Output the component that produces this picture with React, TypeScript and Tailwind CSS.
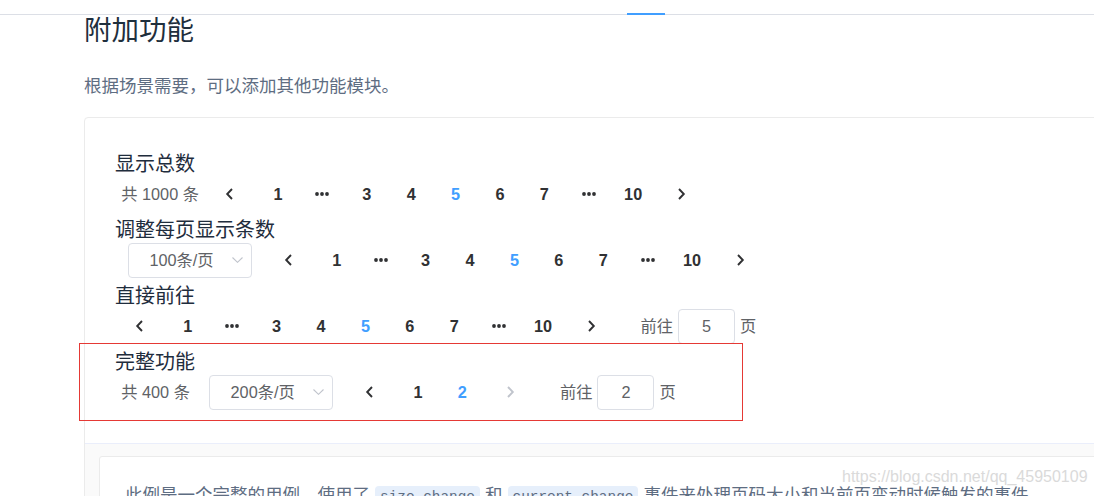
import React from "react";

const FONT = "font-['Liberation_Sans','Noto_Sans_CJK_SC',sans-serif]";

function ArrowLeft({ color = "#303133" }: { color?: string }) {
  return (
    <svg width="9" height="12" viewBox="0 0 9 12" fill="none">
      <path d="M7 1 L2.2 6 L7 11" stroke={color} strokeWidth="1.9" strokeLinejoin="miter" />
    </svg>
  );
}

function ArrowRight({ color = "#303133" }: { color?: string }) {
  return (
    <svg width="9" height="12" viewBox="0 0 9 12" fill="none">
      <path d="M2 1 L6.8 6 L2 11" stroke={color} strokeWidth="1.9" strokeLinejoin="miter" />
    </svg>
  );
}

function More() {
  return (
    <svg width="14" height="4" viewBox="0 0 14 4">
      <circle cx="2" cy="2" r="1.9" fill="#303133" />
      <circle cx="7" cy="2" r="1.9" fill="#303133" />
      <circle cx="12" cy="2" r="1.9" fill="#303133" />
    </svg>
  );
}

function Prev({ disabled }: { disabled?: boolean }) {
  return (
    <div className="flex h-[35px] w-[44.4px] items-center justify-center pl-[7.5px] pr-[15px]">
      <ArrowLeft color={disabled ? "#c0c4cc" : "#303133"} />
    </div>
  );
}

function Next({ disabled }: { disabled?: boolean }) {
  return (
    <div className="flex h-[35px] w-[44.4px] items-center justify-center pl-[15px] pr-[7.5px]">
      <ArrowRight color={disabled ? "#c0c4cc" : "#303133"} />
    </div>
  );
}

function Pager({ items, active }: { items: (number | "more")[]; active: number }) {
  return (
    <div className="flex">
      {items.map((it, i) => (
        <div
          key={i}
          className={`flex h-[35px] w-[44.4px] items-center justify-center text-[16.25px] font-bold ${
            it === active ? "text-[#409eff]" : "text-[#303133]"
          }`}
        >
          {it === "more" ? <More /> : it}
        </div>
      ))}
    </div>
  );
}

function Total({ n }: { n: number }) {
  return <span className="mr-[12.5px] text-[16.25px] text-[#606266]">共 {n} 条</span>;
}

function Sizes({ value }: { value: string }) {
  return (
    <div className="mr-[12.5px] px-[6.25px]">
      <div className="flex h-[35px] w-[124px] items-center rounded-[4px] border border-[#dcdfe6] pl-[12px] pr-[8px]">
        <span className="flex-1 text-center text-[16.25px] text-[#606266]">{value}</span>
        <svg className="ml-[9px]" width="11" height="6" viewBox="0 0 11 6" fill="none">
          <path d="M0.5 0.5 L5.5 5.3 L10.5 0.5" stroke="#c0c4cc" strokeWidth="1.1" />
        </svg>
      </div>
    </div>
  );
}

function Jumper({ value }: { value: number }) {
  return (
    <div className="ml-[31px] flex items-center text-[16.25px] text-[#606266]">
      <span>前往</span>
      <div className="mx-[5px] flex h-[35px] w-[57px] items-center justify-center rounded-[4px] border border-[#dcdfe6] text-[#606266]">
        {value}
      </div>
      <span>页</span>
    </div>
  );
}

function Block({ label, children }: { label: string; children: React.ReactNode }) {
  return (
    <div className="mb-[2px]">
      <div className="relative top-[2px] text-[20px] leading-[24px] text-[#1f2d3d]">{label}</div>
      <div className="flex h-[40px] items-center px-[6.25px]">{children}</div>
    </div>
  );
}

const TEN: (number | "more")[] = [1, "more", 3, 4, 5, 6, 7, "more", 10];

export default function App() {
  return (
    <div className={`relative h-[496px] w-[1094px] overflow-hidden bg-white ${FONT}`}>
      {/* top tab bar */}
      <div className="relative h-[15px] border-b border-[#dcdfe6]">
        <div className="absolute left-[627px] top-[13px] h-[2px] w-[38px] bg-[#409eff]" />
      </div>

      <div className="pl-[84px]">
        <h3 className="relative top-[1px] text-[27.5px] leading-[30px] text-[#1f2f3d]">附加功能</h3>
        <p className="mt-[28.5px] text-[17.5px] leading-[24px] text-[#5e6d82]">
          根据场景需要，可以添加其他功能模块。
        </p>

        <div className="mt-[19.5px] w-[1200px] rounded-[4px] border border-[#ebebeb]">
          <div className="px-[30px] pb-[29px] pt-[32px]">
            <Block label="显示总数">
              <Total n={1000} />
              <Prev />
              <Pager items={TEN} active={5} />
              <Next />
            </Block>
            <Block label="调整每页显示条数">
              <Sizes value="100条/页" />
              <Prev />
              <Pager items={TEN} active={5} />
              <Next />
            </Block>
            <Block label="直接前往">
              <Prev />
              <Pager items={TEN} active={5} />
              <Next />
              <Jumper value={5} />
            </Block>
            <Block label="完整功能">
              <Total n={400} />
              <Sizes value="200条/页" />
              <Prev />
              <Pager items={[1, 2]} active={2} />
              <Next disabled />
              <Jumper value={2} />
            </Block>
          </div>

          <div className="border-t border-[#eaeefb] bg-[#fafafa] pb-[20px] pt-[12px]">
            <div className="ml-[14px] mr-[12px] rounded-[3px] border border-[#ebebeb] bg-white p-[25px] text-[17.5px] leading-[26px] text-[#5e6d82]">
              此例是一个完整的用例，使用了
              <code className="mx-[5px] inline-block h-[22.5px] rounded-[4px] bg-[#e6effb] px-[5px] font-['Liberation_Mono',monospace] text-[14.4px] leading-[22.5px] text-[#5e6d82]">
                size-change
              </code>
              和
              <code className="mx-[5px] inline-block h-[22.5px] rounded-[4px] bg-[#e6effb] px-[5px] font-['Liberation_Mono',monospace] text-[14.4px] leading-[22.5px] text-[#5e6d82]">
                current-change
              </code>
              事件来处理页码大小和当前页变动时候触发的事件。
            </div>
          </div>
        </div>
      </div>

      {/* annotation box */}
      <div className="absolute left-[79px] top-[343px] h-[78px] w-[664px] border border-[#e53935]" />

      {/* watermark */}
      <div className="absolute left-[842px] top-[467px] text-[16px] leading-[20px] text-[#dadada]">
        https://blog.csdn.net/qq_45950109
      </div>
    </div>
  );
}
